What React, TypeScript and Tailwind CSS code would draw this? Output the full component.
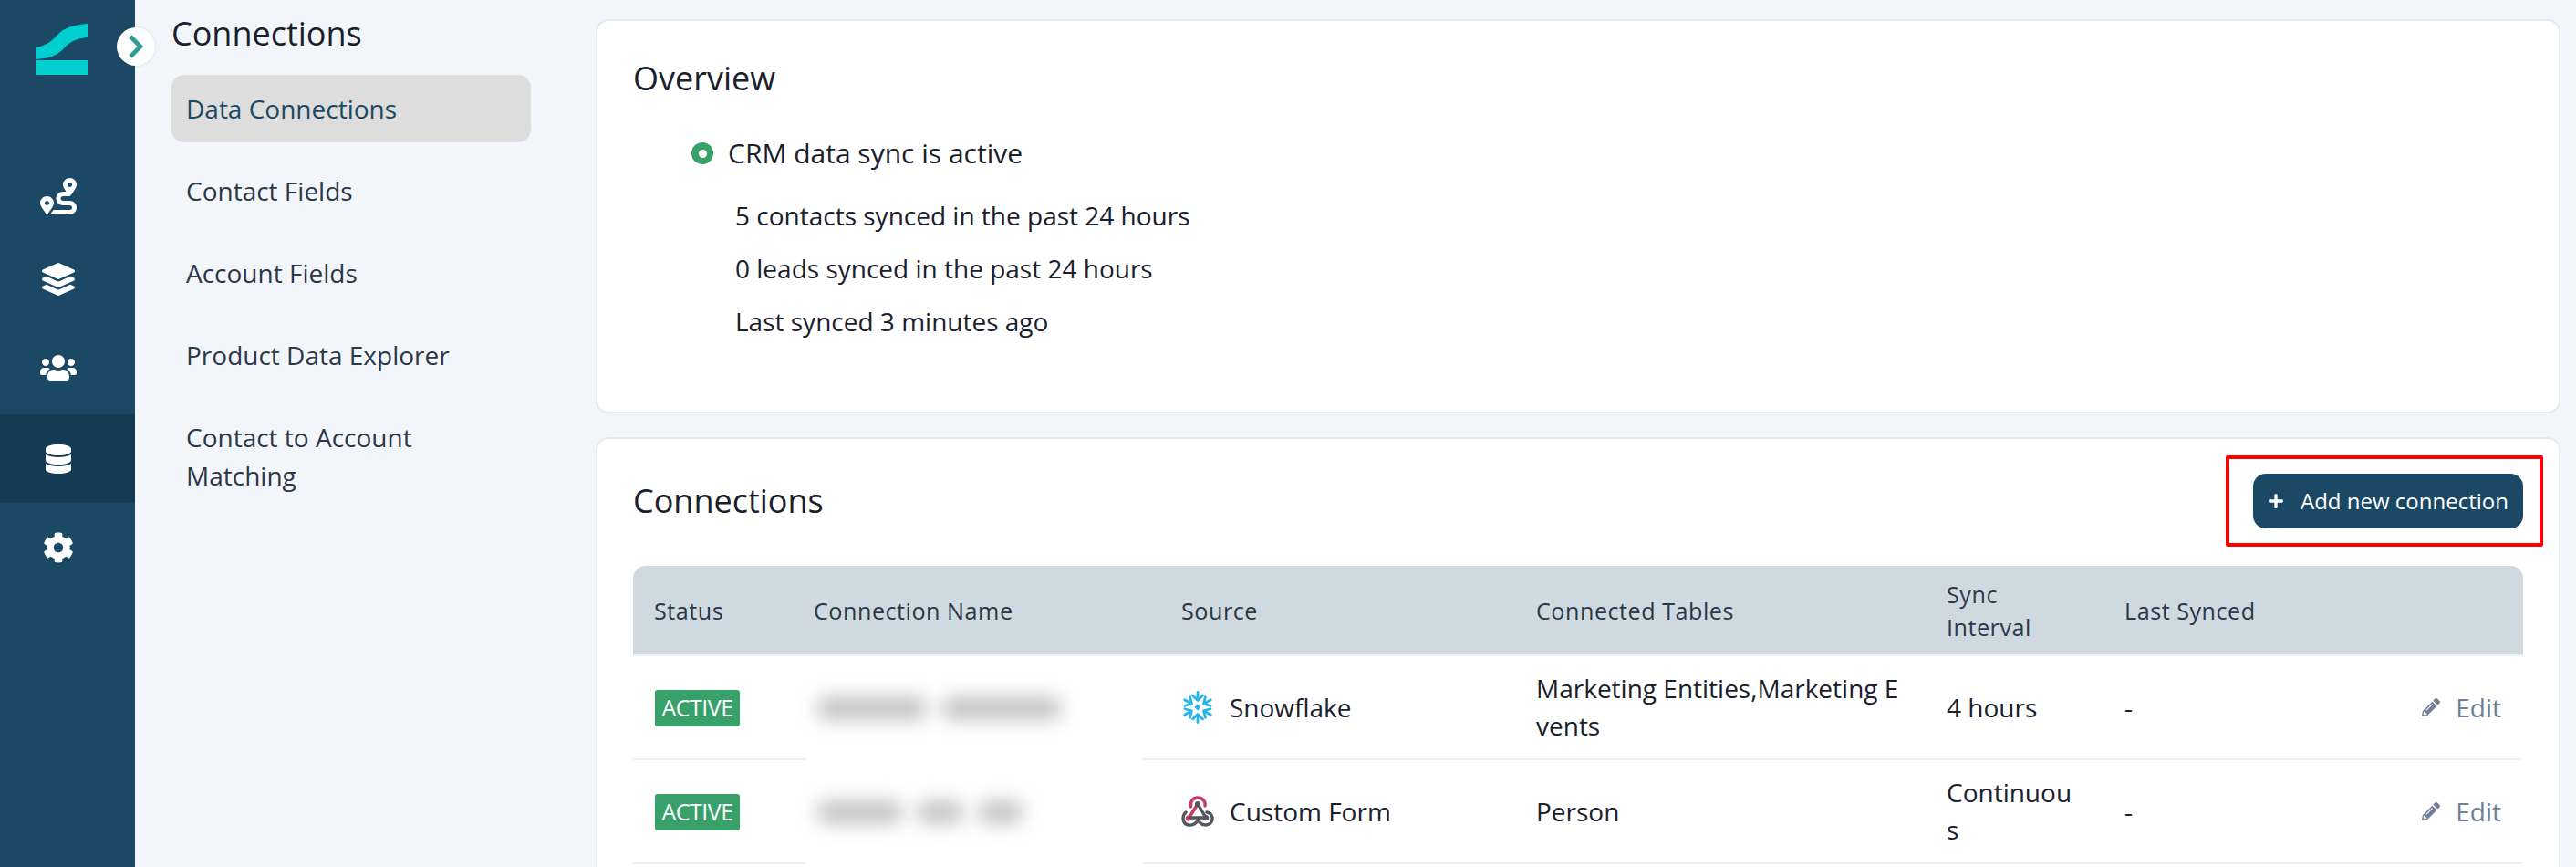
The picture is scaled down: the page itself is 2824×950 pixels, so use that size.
import { FaRoute, FaLayerGroup, FaUsers, FaDatabase, FaCog, FaPencilAlt, FaPlus } from 'react-icons/fa'

const railItems = [
  { Icon: FaRoute, size: 40, active: false, nudge: 'pt-[6px]' },
  { Icon: FaLayerGroup, size: 36, active: false, nudge: 'pb-[6px]' },
  { Icon: FaUsers, size: 40, active: false, nudge: 'pb-[6px]' },
  { Icon: FaDatabase, size: 32, active: true, nudge: '' },
  { Icon: FaCog, size: 34, active: false, nudge: '' },
]

const subNav = ['Data Connections', 'Contact Fields', 'Account Fields', 'Product Data Explorer']

function Logo() {
  return (
    <svg width="56" height="56" viewBox="0 0 56 56" fill="#00cfcf">
      <path d="M0 26C10 24 16 20 22 13C30 4 42 1 56 0V15C44 16 36 20 30 27C22 36 12 38 0 39Z" />
      <rect x="0" y="40" width="56" height="16" />
    </svg>
  )
}

function SnowflakeIcon() {
  return (
    <svg width="36" height="36" viewBox="0 0 36 36" fill="none" stroke="#29b5e8" strokeWidth="2.8" strokeLinecap="round" strokeLinejoin="round">
      {[0, 60, 120, 180, 240, 300].map((deg) => (
        <g key={deg} transform={`rotate(${deg} 18 18)`}>
          <path d="M18 1.5V9.5" />
          <path d="M12.5 5L18 10.5L23.5 5" />
        </g>
      ))}
      <path d="M18 15.5L20.5 18L18 20.5L15.5 18Z" fill="#29b5e8" strokeWidth="1.5" />
    </svg>
  )
}

function WebhookIcon() {
  return (
    <svg width="36" height="36" viewBox="0 0 36 36" fill="none" strokeWidth="3.4" strokeLinecap="round">
      <path d="M10.5 13C9.5 7 13 3 18 3C23 3 27 7 26 12" stroke="#c73a63" />
      <path d="M18 10L8.5 25" stroke="#c73a63" />
      <circle cx="8" cy="25.5" r="2.8" fill="#c73a63" stroke="#c73a63" strokeWidth="1" />
      <circle cx="18" cy="10" r="2.6" fill="#55555f" stroke="#55555f" strokeWidth="1" />
      <path d="M18 10L27 25H10" stroke="#55555f" />
      <path d="M5 19C0.5 23 1 32 8 33C13 33.5 17 31 18 27" stroke="#55555f" />
      <path d="M28 19C34 20 36 27 32 31C28 34.5 23 33 20 30" stroke="#55555f" />
      <circle cx="27" cy="25" r="2.8" fill="#55555f" stroke="#55555f" strokeWidth="1" />
    </svg>
  )
}

function ActiveBadge() {
  return (
    <span className="inline-flex h-[40px] w-[93px] items-center justify-center rounded-[3px] bg-[#38a169] text-[25px] tracking-[-0.5px] text-white">
      ACTIVE
    </span>
  )
}

function EditLink() {
  return (
    <span className="flex items-center justify-end gap-[17px] pr-[24px] text-[#718096]">
      <FaPencilAlt size={20} />
      <span>Edit</span>
    </span>
  )
}

const rows = [
  {
    source: 'Snowflake',
    icon: <SnowflakeIcon />,
    tables: 'Marketing Entities,Marketing Events',
    interval: '4 hours',
    blobs: ['w-[122px]', 'w-[132px]'],
  },
  {
    source: 'Custom Form',
    icon: <WebhookIcon />,
    tables: 'Person',
    interval: 'Continuous',
    blobs: ['w-[95px]', 'w-[52px]', 'w-[50px]'],
  },
]

export default function App() {
  return (
    <div className="flex h-[950px] w-[2824px] overflow-hidden bg-[#f2f6fa] font-['Open_Sans','Noto_Sans',sans-serif] text-[#1a202c]">
      <aside className="relative w-[148px] shrink-0 bg-[#1b4965]">
        <div className="flex h-[163px] items-start pl-[40px] pt-[26px]">
          <Logo />
        </div>
        {railItems.map(({ Icon, size, active, nudge }, i) => (
          <div key={i} className={`flex h-[97px] items-center justify-center pr-[20px] text-white ${nudge} ${active ? 'bg-[#143a54]' : ''}`}>
            <Icon size={size} />
          </div>
        ))}
        <button className="absolute left-[128px] top-[30px] flex h-[42px] w-[42px] items-center justify-center rounded-full bg-white shadow-[0_0_3px_rgba(0,0,0,0.12)]">
          <svg width="16" height="26" viewBox="0 0 16 26" fill="none" stroke="#2d9c94" strokeWidth="4.6">
            <path d="M2 2L13 13L2 24" />
          </svg>
        </button>
      </aside>

      <nav className="w-[505px] shrink-0 pl-[40px] pr-[71px] pt-[12px]">
        <h2 className="mb-[21px] text-[36px] font-medium leading-[49px] text-[#1a202c]">Connections</h2>
        <div className="flex flex-col gap-[16px] text-[28px] leading-[42px] text-[#2d3748]">
          {subNav.map((label, i) => (
            <div key={label} className={`flex h-[74px] items-center rounded-[14px] px-[16px] ${i === 0 ? 'bg-[#dddddd] text-[#1b4965]' : ''}`}>
              {label}
            </div>
          ))}
          <div className="px-[16px] py-[16px]">Contact to Account Matching</div>
        </div>
      </nav>

      <main className="flex min-w-0 flex-1 flex-col gap-[26px] pr-[17px] pt-[21px]">
        <section className="h-[432px] shrink-0 rounded-[14px] border-2 border-[#e5e9ee] bg-white px-[39px]">
          <h3 className="pt-[39px] text-[36px] font-medium leading-[48px]">Overview</h3>
          <div className="pl-[64px] pt-[29px] text-[28px] leading-[58px]">
            <div className="flex items-center gap-[16px] text-[30px] font-medium">
              <span className="flex h-[24px] w-[24px] items-center justify-center rounded-full bg-[#38a169]">
                <span className="h-[9px] w-[9px] rounded-full bg-white" />
              </span>
              CRM data sync is active
            </div>
            <div className="pl-[48px] pt-[10px]">
              <p>5 contacts synced in the past 24 hours</p>
              <p>0 leads synced in the past 24 hours</p>
              <p>Last synced 3 minutes ago</p>
            </div>
          </div>
        </section>

        <section className="h-[600px] shrink-0 rounded-[14px] border-2 border-[#e5e9ee] bg-white px-[39px]">
          <div className="mb-[4px] flex h-[135px] items-center justify-between">
            <h3 className="text-[36px] font-medium">Connections</h3>
            <div className="mr-[-22px] rounded-[2px] border-[4px] border-[#ff0000] py-[16px] pl-[26px] pr-[18px]">
              <button className="flex h-[60px] w-[296px] items-center gap-[18px] rounded-[14px] bg-[#1b4965] pl-[16px] text-[24px] font-medium text-white">
                <FaPlus size={18} />
                Add new connection
              </button>
            </div>
          </div>

          <table className="w-full table-fixed border-collapse text-[28px] leading-[41px]">
            <colgroup>
              <col className="w-[175px]" />
              <col className="w-[403px]" />
              <col className="w-[389px]" />
              <col className="w-[450px]" />
              <col className="w-[195px]" />
              <col className="w-[270px]" />
              <col />
            </colgroup>
            <thead>
              <tr className="h-[98px] border-b-2 border-[#edf2f7] bg-[#cedae0] text-left text-[25.2px] leading-[36px] tracking-[0.5px] text-[#2d3748]">
                <th className="rounded-tl-[14px] pl-[23px] font-medium">Status</th>
                <th className="pl-[23px] font-medium">Connection Name</th>
                <th className="pl-[23px] font-medium">Source</th>
                <th className="pl-[23px] font-medium">Connected Tables</th>
                <th className="pl-[23px] pr-[40px] font-medium">Sync Interval</th>
                <th className="pl-[23px] font-medium">Last Synced</th>
                <th className="rounded-tr-[14px]" />
              </tr>
            </thead>
            <tbody>
              {rows.map((row) => (
                <tr key={row.source} className="h-[114px] border-b-2 border-[#edf2f7]">
                  <td className="pl-[24px]"><ActiveBadge /></td>
                  <td className="relative">
                    {/* blurred name, the white patch also hides the row line */}
                    <div className="absolute bottom-[-2px] left-[14px] top-0 flex w-[370px] items-center gap-[15px] bg-white pl-[12px]">
                      {row.blobs.map((w, i) => (
                        <span key={i} className={`h-[26px] rounded-full bg-[#c4c4c4] blur-[10px] ${w}`} />
                      ))}
                    </div>
                  </td>
                  <td className="pl-[23px]">
                    <div className="flex items-center gap-[17px]">{row.icon}{row.source}</div>
                  </td>
                  <td className="break-all pl-[23px] pr-[20px]">{row.tables}</td>
                  <td className="break-all pl-[23px] pr-[32px]">{row.interval}</td>
                  <td className="pl-[23px]">-</td>
                  <td><EditLink /></td>
                </tr>
              ))}
            </tbody>
          </table>
        </section>
      </main>
    </div>
  )
}
